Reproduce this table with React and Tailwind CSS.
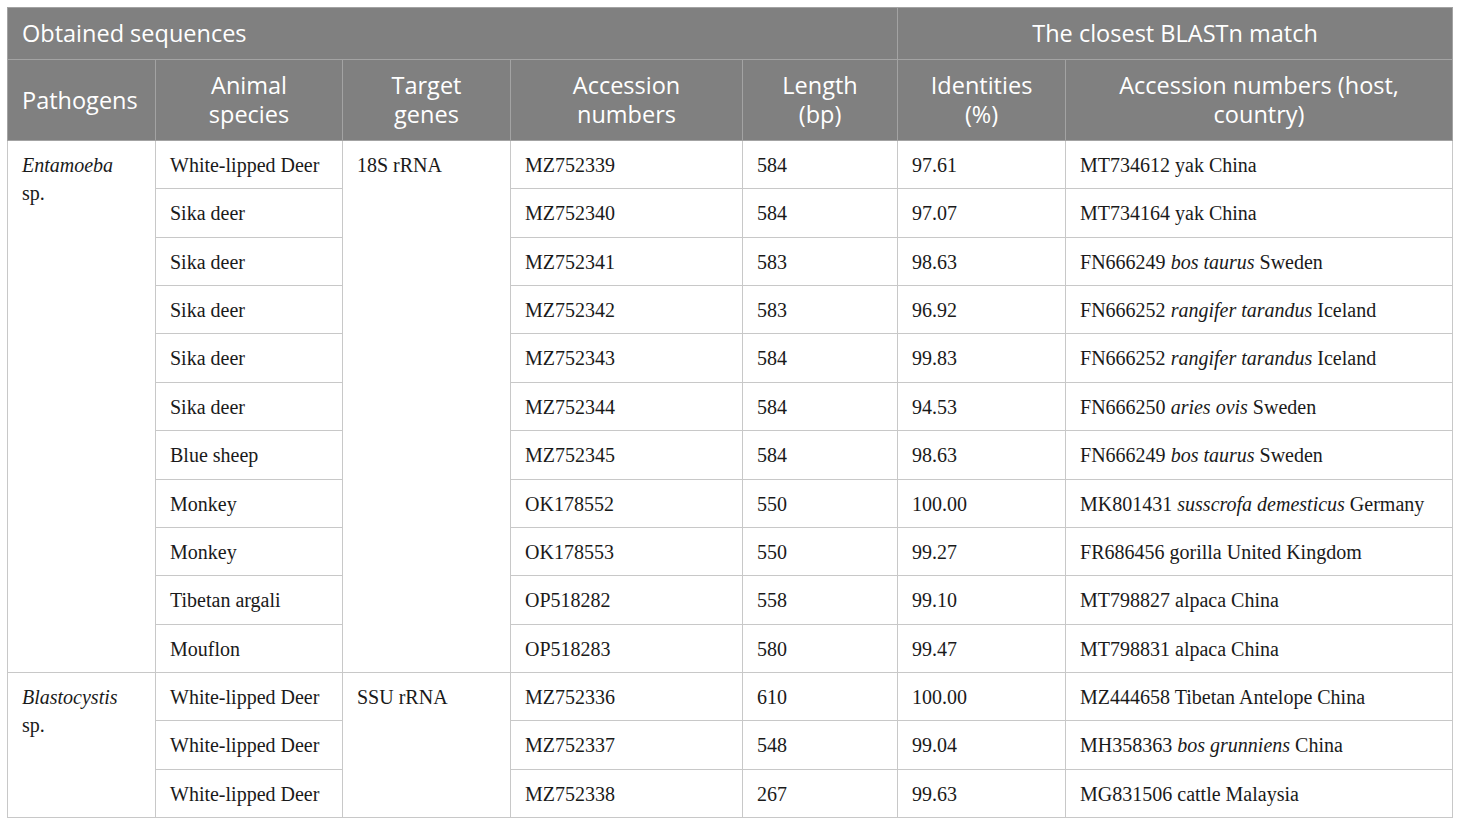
import React from "react";

const rows = [
  ["White-lipped Deer", "MZ752339", "584", "97.61", ["MT734612 yak China"]],
  ["Sika deer", "MZ752340", "584", "97.07", ["MT734164 yak China"]],
  ["Sika deer", "MZ752341", "583", "98.63", ["FN666249 ", "bos taurus", " Sweden"]],
  ["Sika deer", "MZ752342", "583", "96.92", ["FN666252 ", "rangifer tarandus", " Iceland"]],
  ["Sika deer", "MZ752343", "584", "99.83", ["FN666252 ", "rangifer tarandus", " Iceland"]],
  ["Sika deer", "MZ752344", "584", "94.53", ["FN666250 ", "aries ovis", " Sweden"]],
  ["Blue sheep", "MZ752345", "584", "98.63", ["FN666249 ", "bos taurus", " Sweden"]],
  ["Monkey", "OK178552", "550", "100.00", ["MK801431 ", "susscrofa demesticus", " Germany"]],
  ["Monkey", "OK178553", "550", "99.27", ["FR686456 gorilla United Kingdom"]],
  ["Tibetan argali", "OP518282", "558", "99.10", ["MT798827 alpaca China"]],
  ["Mouflon", "OP518283", "580", "99.47", ["MT798831 alpaca China"]],
  ["White-lipped Deer", "MZ752336", "610", "100.00", ["MZ444658 Tibetan Antelope China"]],
  ["White-lipped Deer", "MZ752337", "548", "99.04", ["MH358363 ", "bos grunniens", " China"]],
  ["White-lipped Deer", "MZ752338", "267", "99.63", ["MG831506 cattle Malaysia"]],
];

const th = "border border-[#a3a3a3] px-[14px] font-normal align-middle";
const td = "border border-[#c8c8c8] px-[14px] pt-[10px] align-top";

const Match = ({ parts }) => (
  <>
    {parts.map((p, i) => (i % 2 === 1 ? <i key={i}>{p}</i> : <span key={i}>{p}</span>))}
  </>
);

export default function App() {
  return (
    <div className="w-[1460px] h-[825px] bg-white pt-[7px] pl-[7px]">
      <table className="table-fixed border-collapse w-[1445px] border border-[#c8c8c8]">
        <colgroup>
          <col className="w-[148px]" />
          <col className="w-[187px]" />
          <col className="w-[168px]" />
          <col className="w-[232px]" />
          <col className="w-[155px]" />
          <col className="w-[168px]" />
          <col className="w-[387px]" />
        </colgroup>
        <thead className="bg-[#808080] text-white text-[23.5px] leading-[29px] font-['Open_Sans',sans-serif]">
          <tr className="h-[52px]">
            <th colSpan={5} className={`${th} text-left`}>Obtained sequences</th>
            <th colSpan={2} className={`${th} text-center`}>The closest BLASTn match</th>
          </tr>
          <tr className="h-[81px]">
            <th className={`${th} text-left`}>Pathogens</th>
            <th className={`${th} text-center`}>Animal<br />species</th>
            <th className={`${th} text-center`}>Target<br />genes</th>
            <th className={`${th} text-center`}>Accession<br />numbers</th>
            <th className={`${th} text-center`}>Length<br />(bp)</th>
            <th className={`${th} text-center`}>Identities<br />(%)</th>
            <th className={`${th} text-center`}>Accession numbers (host,<br />country)</th>
          </tr>
        </thead>
        <tbody className="text-[#1a1a1a] text-[20px] leading-[28px] font-['Liberation_Serif',serif]">
          {rows.map((r, i) => (
            <tr key={i} className="h-[48.36px]">
              {i === 0 && (
                <td rowSpan={11} className={td}>
                  <i>Entamoeba</i>
                  <br />
                  sp.
                </td>
              )}
              {i === 11 && (
                <td rowSpan={3} className={td}>
                  <i>Blastocystis</i>
                  <br />
                  sp.
                </td>
              )}
              <td className={td}>{r[0]}</td>
              {i === 0 && (
                <td rowSpan={11} className={td}>18S rRNA</td>
              )}
              {i === 11 && (
                <td rowSpan={3} className={td}>SSU rRNA</td>
              )}
              <td className={td}>{r[1]}</td>
              <td className={td}>{r[2]}</td>
              <td className={td}>{r[3]}</td>
              <td className={td}>
                <Match parts={r[4]} />
              </td>
            </tr>
          ))}
        </tbody>
      </table>
    </div>
  );
}
